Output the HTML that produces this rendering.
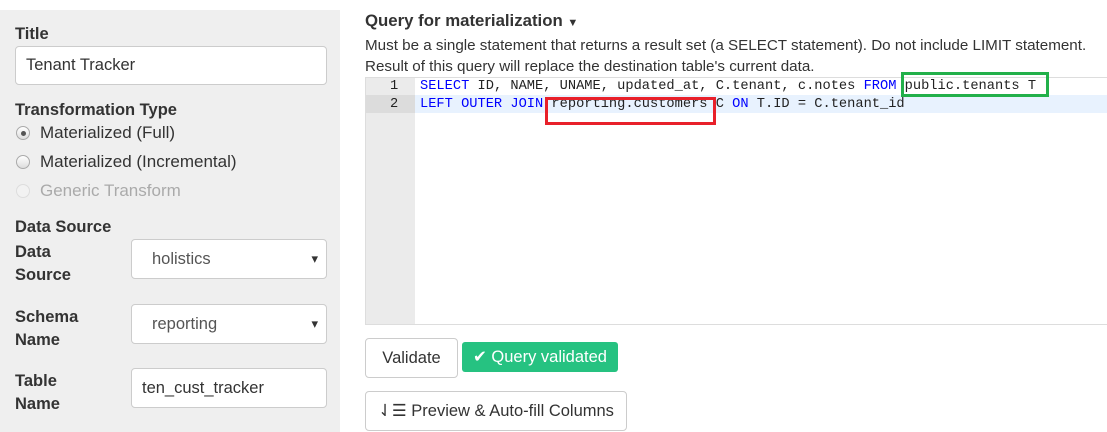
<!DOCTYPE html>
<html><head><style>
body{margin:0;width:1107px;height:432px;overflow:hidden;background:#fff;font-family:"Liberation Sans",sans-serif;color:#333;position:relative}
.left{position:absolute;left:0;top:10px;width:340px;height:422px;background:#efefef}
.a{position:absolute}
.lbl{font-size:16.5px;font-weight:bold;color:#333}
.inp{position:absolute;background:#fff;border:1px solid #ccc;border-radius:4px;font-size:16.5px;box-sizing:border-box;padding-left:10px;display:flex;align-items:center}
.sel{padding-left:20px;color:#555}
.sel:after{content:"▾";position:absolute;right:8px;font-size:13px;color:#333}
.radio{position:absolute;font-size:17px;display:flex;align-items:center}
.radio i{width:14px;height:14px;border:1px solid #aaa;border-radius:50%;background:linear-gradient(#fff,#ddd);margin-right:10px;position:relative;box-sizing:border-box}
.code{font-family:"Liberation Mono",monospace;font-size:13.7px;white-space:pre;position:absolute;left:420px;color:#222}
.k{color:#00f}
.btn{position:absolute;border:1px solid #ccc;border-radius:4px;background:#fff;font-size:16.5px;display:flex;align-items:center;justify-content:center;box-sizing:border-box}
</style></head><body>
<div class="left"></div>
<div class="a lbl" style="left:15px;top:25px">Title</div>
<div class="inp" style="left:15px;top:46px;width:312px;height:39px">Tenant Tracker</div>
<div class="a lbl" style="left:15px;top:101px">Transformation Type</div>
<div class="radio" style="left:16px;top:123px"><i><b style="position:absolute;left:3.5px;top:3.5px;width:5px;height:5px;border-radius:50%;background:#555"></b></i>Materialized (Full)</div>
<div class="radio" style="left:16px;top:152px"><i></i>Materialized (Incremental)</div>
<div class="radio" style="left:16px;top:181px;color:#aaa"><i style="border-color:#ddd;background:#f2f2f2"></i>Generic Transform</div>
<div class="a lbl" style="left:15px;top:218px">Data Source</div>
<div class="a lbl" style="left:15px;top:241px;line-height:23px">Data<br>Source</div>
<div class="inp sel" style="left:131px;top:239px;width:196px;height:40px">holistics</div>
<div class="a lbl" style="left:15px;top:306px;line-height:23px">Schema<br>Name</div>
<div class="inp sel" style="left:131px;top:304px;width:196px;height:40px">reporting</div>
<div class="a lbl" style="left:15px;top:370px;line-height:23px">Table<br>Name</div>
<div class="inp" style="left:131px;top:368px;width:196px;height:40px">ten_cust_tracker</div>

<div class="a" style="left:365px;top:11px;font-size:16.8px;font-weight:bold">Query for materialization <span style="font-size:11px">▼</span></div>
<div class="a" style="left:365px;top:35px;font-size:15.2px;line-height:21px;color:#333;white-space:nowrap">Must be a single statement that returns a result set (a SELECT statement). Do not include LIMIT statement.<br>Result of this query will replace the destination table's current data.</div>
<div class="a" style="left:365px;top:77px;width:742px;height:248px;border:1px solid #ddd;border-right:none;box-sizing:border-box"></div>
<div class="a" style="left:366px;top:78px;width:49px;height:246px;background:#ebebeb"></div>
<div class="a" style="left:366px;top:95px;width:49px;height:18px;background:#dcdcdc"></div>
<div class="a" style="left:415px;top:95px;width:692px;height:18px;background:#e8f2fe"></div>
<div class="code" style="left:390px;top:79px">1</div>
<div class="code" style="left:390px;top:97px">2</div>
<div class="code" style="top:79px"><span class="k">SELECT</span> ID, NAME, UNAME, updated_at, C.tenant, c.notes <span class="k">FROM</span> public.tenants T</div>
<div class="code" style="top:97px"><span class="k">LEFT OUTER JOIN</span> reporting.customers C <span class="k">ON</span> T.ID = C.tenant_id</div>
<div class="a" style="left:901px;top:72px;width:148px;height:25px;border:3px solid #22b04a;box-sizing:border-box"></div>
<div class="a" style="left:545px;top:97px;width:171px;height:28px;border:3px solid #e8202a;box-sizing:border-box"></div>

<div class="btn" style="left:365px;top:338px;width:93px;height:40px">Validate</div>
<div class="a" style="left:462px;top:342px;width:156px;height:30px;background:#26c281;border-radius:3px;color:#fff;font-size:16.5px;display:flex;align-items:center;justify-content:center">✔ Query validated</div>
<div class="btn" style="left:365px;top:391px;width:262px;height:40px">⇃☰ Preview &amp; Auto-fill Columns</div>
</body></html>
